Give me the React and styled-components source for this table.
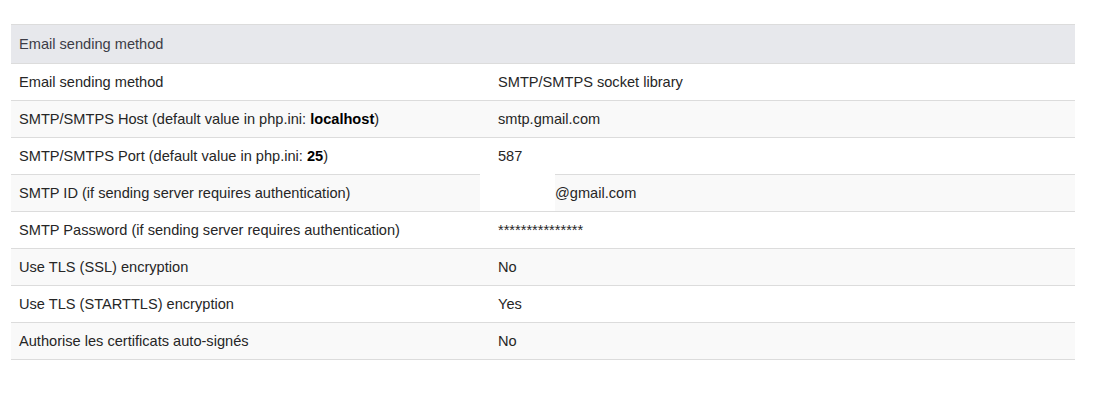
import styled, { createGlobalStyle } from "styled-components";

const rows = [
  { label: "Email sending method", value: "SMTP/SMTPS socket library" },
  {
    label: (
      <>
        SMTP/SMTPS Host (default value in php.ini: <b>localhost</b>)
      </>
    ),
    value: "smtp.gmail.com",
  },
  {
    label: (
      <>
        SMTP/SMTPS Port (default value in php.ini: <b>25</b>)
      </>
    ),
    value: "587",
  },
  {
    label: "SMTP ID (if sending server requires authentication)",
    value: "@gmail.com",
    masked: true,
  },
  {
    label: "SMTP Password (if sending server requires authentication)",
    value: "***************",
  },
  { label: "Use TLS (SSL) encryption", value: "No" },
  { label: "Use TLS (STARTTLS) encryption", value: "Yes" },
  { label: "Authorise les certificats auto-signés", value: "No" },
];

function App() {
  return (
    <>
      <GlobalStyle />
      <Page>
        <Table>
          <Header>Email sending method</Header>
          {rows.map((row, i) => (
            <Row key={i} $odd={i % 2 === 1}>
              <Label>{row.label}</Label>
              <Value>
                {row.masked && <Spacer />}
                {row.value}
              </Value>
              {row.masked && <Mask />}
            </Row>
          ))}
        </Table>
      </Page>
    </>
  );
}

const GlobalStyle = createGlobalStyle`
  body {
    margin: 0;
    background: #fff;
    font-family: "Liberation Sans", Arial, sans-serif;
  }
`;

const Page = styled.div`
  padding: 24px 0 0 11px;
`;

const Table = styled.div`
  width: 1064px;
  border-top: 1px solid #dcdcdc;
  font-size: 14.6px;
  color: #262626;
`;

const Header = styled.div`
  height: 38px;
  display: flex;
  align-items: center;
  padding-left: 8px;
  background: #e7e8ec;
  color: #3c3c46;
  border-bottom: 1px solid #dcdcdc;
`;

const Row = styled.div`
  position: relative;
  display: grid;
  grid-template-columns: 479px 1fr;
  height: 36px;
  align-items: center;
  border-bottom: 1px solid #dcdcdc;
  background: ${(p) => (p.$odd ? "#f9f9f9" : "#fff")};
`;

const Label = styled.div`
  padding-left: 8px;
  b {
    font-weight: bold;
    color: #000;
  }
`;

const Value = styled.div`
  padding-left: 8px;
`;

const Spacer = styled.span`
  display: inline-block;
  width: 57px;
`;

const Mask = styled.span`
  position: absolute;
  left: 469px;
  top: -2px;
  width: 75px;
  height: 38px;
  background: #fff;
`;

export default App;
